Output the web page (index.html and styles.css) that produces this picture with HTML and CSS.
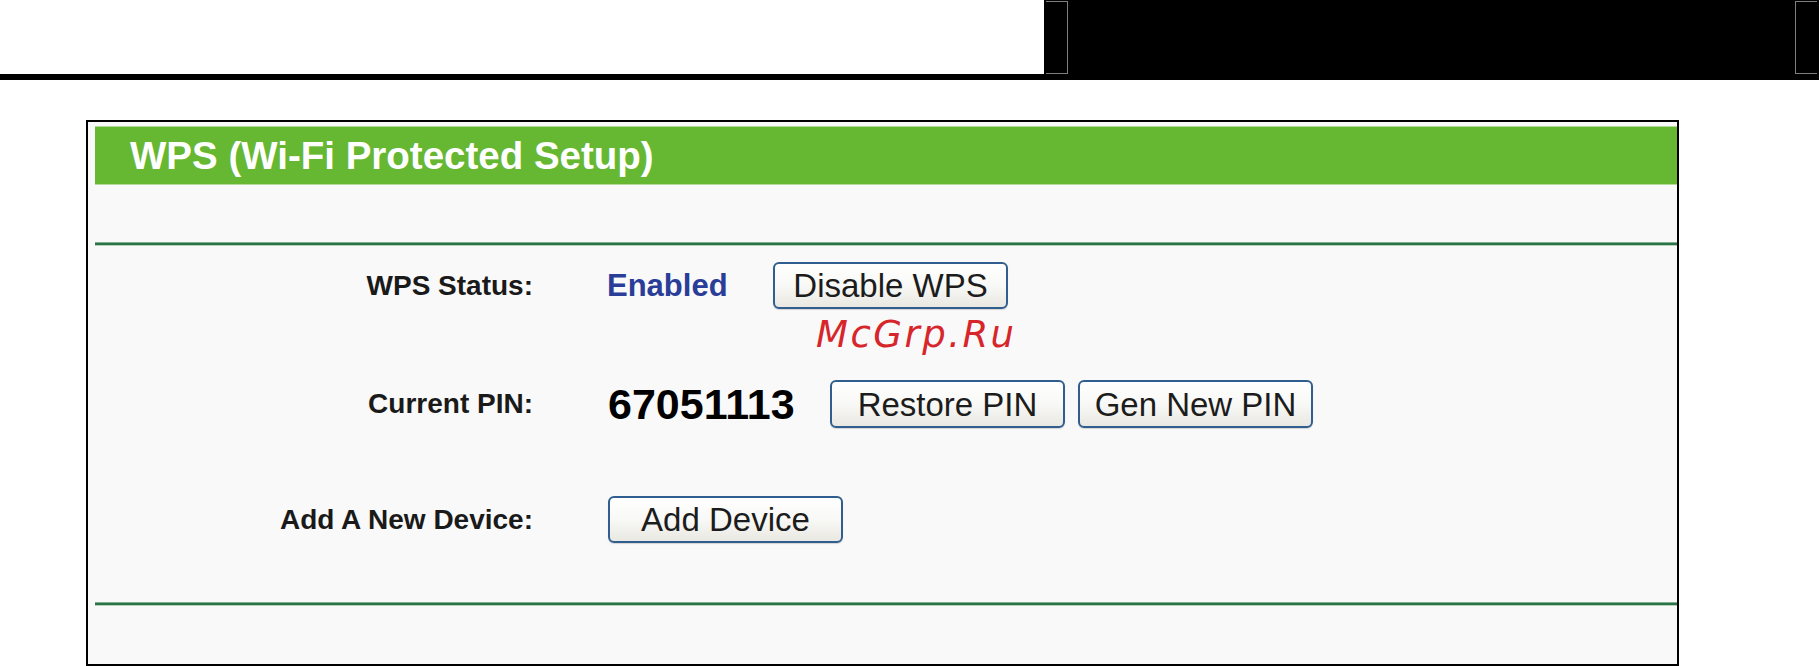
FILE: index.html
```html
<!DOCTYPE html>
<html>
<head>
<meta charset="utf-8">
<title>WPS (Wi-Fi Protected Setup)</title>
<link rel="stylesheet" href="styles.css">
</head>
<body>
<div class="topbar">
  <div class="top-left"></div>
  <div class="top-box">
    <span class="mark mark-l"></span>
    <span class="mark mark-r"></span>
  </div>
</div>
<div class="rule"></div>

<div class="panel">
  <div class="panel-head">WPS (Wi-Fi Protected Setup)</div>
  <div class="divider first"></div>

  <div class="row r1">
    <div class="label">WPS Status:</div>
    <div class="status">Enabled</div>
    <button class="btn">Disable WPS</button>
  </div>

  <div class="row r2">
    <div class="label">Current PIN:</div>
    <div class="pin">67051113</div>
    <button class="btn">Restore PIN</button>
    <button class="btn btn-next">Gen New PIN</button>
  </div>

  <div class="row r3">
    <div class="label">Add A New Device:</div>
    <button class="btn">Add Device</button>
  </div>

  <div class="divider last"></div>
</div>

<div class="watermark">McGrp.Ru</div>
</body>
</html>
```

FILE: styles.css
```css
html, body {
  margin: 0;
  padding: 0;
  background: #ffffff;
  overflow: hidden;
}

body {
  font-family: "Liberation Sans", Arial, sans-serif;
  position: relative;
  width: 1819px;
  height: 666px;
}

/* top strip */
.topbar {
  display: flex;
  height: 74px;
}

.top-left {
  flex: 1;
  background: #ffffff;
}

.top-box {
  width: 775px;
  background: #000000;
  display: flex;
  justify-content: space-between;
  padding: 1px 2px 0 2px;
  box-sizing: border-box;
}

.mark {
  display: block;
  width: 22px;
  height: 73px;
  box-sizing: border-box;
  border-top: 1px solid #7f7f7f;
  border-bottom: 1px solid #7f7f7f;
}

.mark-l {
  border-right: 1px solid #7f7f7f;
}

.mark-r {
  border-left: 1px solid #7f7f7f;
}

.rule {
  height: 6px;
  background: #000000;
}

/* panel */
.panel {
  margin: 40px 0 0 86px;
  width: 1593px;
  height: 546px;
  box-sizing: border-box;
  border: 2px solid #000000;
  padding: 4px 0 0 7px;
  background: #f9f9f9;
  overflow: hidden;
}

.panel-head {
  height: 59px;
  box-sizing: border-box;
  border-top: 1px solid #b3db97;
  border-bottom: 1px solid #b3db97;
  background: #66b832;
  color: #ffffff;
  font-weight: bold;
  font-size: 38.5px;
  line-height: 57px;
  padding-left: 35px;
  white-space: nowrap;
}

.divider {
  height: 4px;
  box-sizing: border-box;
  border-top: 1px solid #7fae8f;
  border-bottom: 1px solid #b3d3bd;
  background: #2b7447;
}

.divider.first {
  margin-top: 57px;
}

.divider.last {
  margin-top: 59px;
}

.row {
  display: flex;
  align-items: center;
}

.r1 {
  margin-top: 16px;
  height: 47px;
}

.r2 {
  margin-top: 71px;
  height: 48px;
}

.r3 {
  margin-top: 68px;
  height: 47px;
}

.label {
  width: 438px;
  text-align: right;
  font-size: 28px;
  font-weight: bold;
  color: #1a1a1a;
  margin-right: 74px;
  white-space: nowrap;
}

.status {
  width: 166px;
  font-size: 31px;
  font-weight: bold;
  color: #2a3d98;
}

.pin {
  width: 222px;
  margin-left: 1px;
  font-size: 43px;
  font-weight: bold;
  color: #000000;
}

.r3 .btn {
  margin-left: 1px;
}

.btn {
  width: 235px;
  height: 100%;
  box-sizing: border-box;
  padding: 0;
  border: 2px solid #2f5e8f;
  border-radius: 6px;
  background: linear-gradient(#ffffff 0%, #f8f8f6 50%, #e9e8e2 100%);
  box-shadow: 0 1px 1px rgba(0, 0, 0, 0.15);
  font-family: "Liberation Sans", Arial, sans-serif;
  font-size: 33px;
  line-height: 43px;
  color: #1c1c1c;
  text-align: center;
  white-space: nowrap;
}

.btn-next {
  margin-left: 13px;
}

/* overlay watermark */
.watermark {
  position: absolute;
  left: 816px;
  top: 316px;
  font-family: "DejaVu Sans", sans-serif;
  font-style: italic;
  font-size: 37px;
  line-height: 1;
  letter-spacing: 2.5px;
  color: #d7262b;
  white-space: nowrap;
}
```
